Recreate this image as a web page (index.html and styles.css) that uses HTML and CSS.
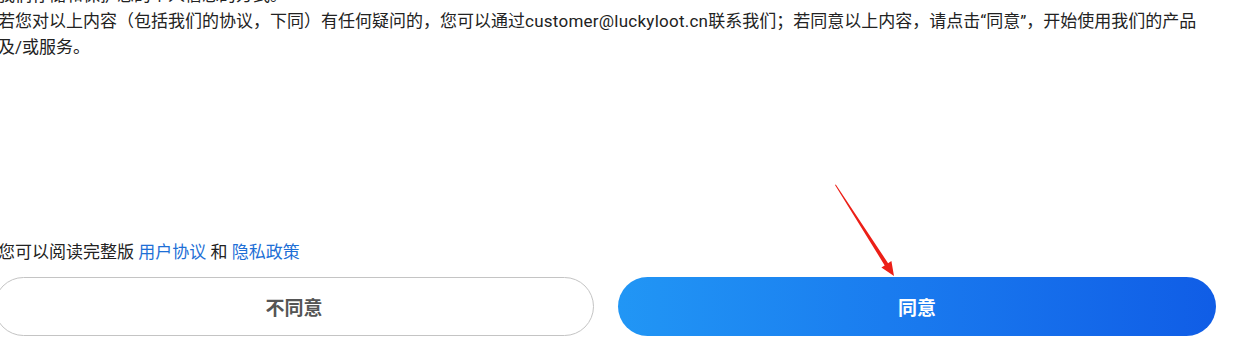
FILE: index.html
```html
<!DOCTYPE html>
<html lang="zh-CN">
<head>
<meta charset="utf-8">
<title>用户协议与隐私政策</title>
<link rel="stylesheet" href="styles.css">
</head>
<body>
<div class="page">
  <div class="content">
    <p class="para">我们存储和保护您的个人信息的方式。</p>
    <p class="para">若您对以上内容（包括我们的协议，下同）有任何疑问的，您可以通过<span class="email">customer@luckyloot.cn</span>联系我们；若同意以上内容，请点击“同意”，开始使用我们的产品及/或服务。</p>
  </div>
  <div class="footer">
    <p class="notice">您可以阅读完整版 <a class="link" href="#">用户协议</a> 和 <a class="link" href="#">隐私政策</a></p>
    <div class="actions">
      <button class="btn btn-disagree" type="button">不同意</button>
      <button class="btn btn-agree" type="button">同意</button>
    </div>
  </div>
</div>
<svg class="arrow" width="1246" height="356" viewBox="0 0 1246 356" aria-hidden="true">
  <polygon fill="#ec1f17" points="835,185 835.8,184.6 888.1,263.2 891.4,261 894,276 881.4,267.6 884.7,265.4"/>
</svg>
</body>
</html>
```
FILE: styles.css
```css
html, body {
  margin: 0;
  padding: 0;
  background: #ffffff;
  overflow: hidden;
}

body {
  width: 1246px;
  height: 356px;
  position: relative;
  font-family: Roboto, "Noto Sans CJK SC", sans-serif;
  color: #222222;
}

.page {
  margin-top: -18px;
  margin-left: -6px;
  width: 1222px;
  height: 374px;
  box-sizing: border-box;
  padding-bottom: 20px;
  display: flex;
  flex-direction: column;
  justify-content: space-between;
}

.content {
  padding-left: 4px;
  padding-right: 10px;
}

.para {
  margin: 0;
  font-size: 17px;
  line-height: 26px;
}

.email {
  letter-spacing: 0.25px;
}

.footer {
  display: flex;
  flex-direction: column;
  gap: 12px;
}

.notice {
  margin: 0;
  padding-left: 4px;
  font-size: 17px;
  line-height: 26px;
  color: #222222;
}

.link {
  color: #1e6fd6;
  text-decoration: none;
}

.actions {
  display: flex;
  gap: 24px;
}

.btn {
  flex: 1;
  height: 59px;
  border-radius: 30px;
  font-family: Roboto, "Noto Sans CJK SC", sans-serif;
  font-size: 19px;
  font-weight: 700;
  cursor: pointer;
}

.btn-disagree {
  background: #ffffff;
  border: 1px solid #c4c4c4;
  color: #555555;
}

.btn-agree {
  border: none;
  color: #ffffff;
  background: linear-gradient(90deg, #2196f5 0%, #1a7cef 45%, #105de6 100%);
}

.arrow {
  position: absolute;
  left: 0;
  top: 0;
  pointer-events: none;
}
```
